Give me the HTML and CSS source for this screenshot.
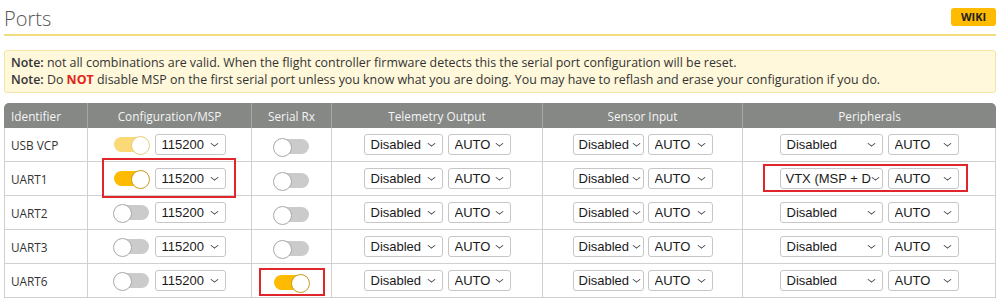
FILE: index.html
```html
<!DOCTYPE html>
<html lang="en">
  <head>
    <meta charset="UTF-8" />
    <meta name="viewport" content="width=device-width, initial-scale=1.0" />
    <title>Ports</title>
    <link rel="stylesheet" href="styles.css">
  </head>
  <body>
    <div class="wrap">
      <div class="title-bar">
        <h1>Ports</h1>
        <a class="wiki" href="#">WIKI</a>
      </div>

      <div class="note">
        <p><b>Note:</b> not all combinations are valid. When the flight controller firmware detects this the serial port configuration will be reset.</p>
        <p><b>Note:</b> Do <span class="warn">NOT</span> disable MSP on the first serial port unless you know what you are doing. You may have to reflash and erase your configuration if you do.</p>
      </div>

      <table class="ports">
        <thead>
          <tr>
            <th class="c-id">Identifier</th>
            <th class="c-cfg">Configuration/MSP</th>
            <th class="c-rx">Serial Rx</th>
            <th class="c-tel">Telemetry Output</th>
            <th class="c-sen">Sensor Input</th>
            <th class="c-per">Peripherals</th>
          </tr>
        </thead>
        <tbody>
          <tr>
            <td class="ident">USB VCP</td>
            <td><div class="pair"><span class="switch on faded"></span><span class="sel w71"><span>115200</span><i></i></span></div></td>
            <td><span class="switch"></span></td>
            <td><div class="pair g5"><span class="sel w79"><span>Disabled</span><i></i></span><span class="sel w63"><span>AUTO</span><i></i></span></div></td>
            <td><div class="pair g4"><span class="sel w71 tight"><span>Disabled</span><i></i></span><span class="sel w65"><span>AUTO</span><i></i></span></div></td>
            <td><div class="pair g5"><span class="sel w103"><span>Disabled</span><i></i></span><span class="sel w71"><span>AUTO</span><i></i></span></div></td>
          </tr>
          <tr>
            <td class="ident">UART1</td>
            <td><div class="pair mark mark-cfg"><span class="switch on"></span><span class="sel w71"><span>115200</span><i></i></span></div></td>
            <td><span class="switch"></span></td>
            <td><div class="pair g5"><span class="sel w79"><span>Disabled</span><i></i></span><span class="sel w63"><span>AUTO</span><i></i></span></div></td>
            <td><div class="pair g4"><span class="sel w71 tight"><span>Disabled</span><i></i></span><span class="sel w65"><span>AUTO</span><i></i></span></div></td>
            <td><div class="pair g5 mark mark-per"><span class="sel w103 tight"><span>VTX (MSP + D</span><i></i></span><span class="sel w71"><span>AUTO</span><i></i></span></div></td>
          </tr>
          <tr>
            <td class="ident">UART2</td>
            <td><div class="pair"><span class="switch"></span><span class="sel w71"><span>115200</span><i></i></span></div></td>
            <td><span class="switch"></span></td>
            <td><div class="pair g5"><span class="sel w79"><span>Disabled</span><i></i></span><span class="sel w63"><span>AUTO</span><i></i></span></div></td>
            <td><div class="pair g4"><span class="sel w71 tight"><span>Disabled</span><i></i></span><span class="sel w65"><span>AUTO</span><i></i></span></div></td>
            <td><div class="pair g5"><span class="sel w103"><span>Disabled</span><i></i></span><span class="sel w71"><span>AUTO</span><i></i></span></div></td>
          </tr>
          <tr>
            <td class="ident">UART3</td>
            <td><div class="pair"><span class="switch"></span><span class="sel w71"><span>115200</span><i></i></span></div></td>
            <td><span class="switch"></span></td>
            <td><div class="pair g5"><span class="sel w79"><span>Disabled</span><i></i></span><span class="sel w63"><span>AUTO</span><i></i></span></div></td>
            <td><div class="pair g4"><span class="sel w71 tight"><span>Disabled</span><i></i></span><span class="sel w65"><span>AUTO</span><i></i></span></div></td>
            <td><div class="pair g5"><span class="sel w103"><span>Disabled</span><i></i></span><span class="sel w71"><span>AUTO</span><i></i></span></div></td>
          </tr>
          <tr>
            <td class="ident">UART6</td>
            <td><div class="pair"><span class="switch"></span><span class="sel w71"><span>115200</span><i></i></span></div></td>
            <td><div class="pair mark mark-rx"><span class="switch on"></span></div></td>
            <td><div class="pair g5"><span class="sel w79"><span>Disabled</span><i></i></span><span class="sel w63"><span>AUTO</span><i></i></span></div></td>
            <td><div class="pair g4"><span class="sel w71 tight"><span>Disabled</span><i></i></span><span class="sel w65"><span>AUTO</span><i></i></span></div></td>
            <td><div class="pair g5"><span class="sel w103"><span>Disabled</span><i></i></span><span class="sel w71"><span>AUTO</span><i></i></span></div></td>
          </tr>
        </tbody>
      </table>
    </div>
  </body>
</html>
```

FILE: styles.css
```css
* {
  box-sizing: border-box;
  margin: 0;
  padding: 0;
}
body {
  background-color: #fff;
  font-family: "Open Sans", "Liberation Sans", sans-serif;
  font-size: 13px;
  color: #333;
}
.wrap {
  padding: 0 4px;
}
.title-bar {
  display: flex;
  justify-content: space-between;
  align-items: flex-start;
  height: 36px;
  padding-top: 6px;
  border-bottom: 2px solid #f1dc80;
}
h1 {
  font-weight: 300;
  font-size: 20px;
  line-height: 26px;
  color: #555;
}
.wiki {
  display: block;
  width: 45px;
  height: 18px;
  line-height: 18px;
  margin-top: 2px;
  text-align: center;
  background-color: #ffbb00;
  border-radius: 3px;
  color: #222;
  font-size: 11px;
  font-weight: 700;
  text-decoration: none;
}
.note {
  margin-top: 14px;
  padding: 3px 6px 4px;
  background-color: #fff8db;
  border: 1px solid #f3e4a8;
  border-radius: 3px;
  font-size: 12.4px;
  line-height: 17px;
  color: #333;
}
.note b {
  font-weight: 600;
}
.warn {
  color: #e2231a;
  font-weight: 700;
}

/* table */
.ports {
  width: 100%;
  margin-top: 10px;
  border-collapse: separate;
  border-spacing: 0;
  table-layout: fixed;
}
.c-id { width: 83px; }
.c-cfg { width: 164px; }
.c-rx { width: 80px; }
.c-tel { width: 211px; }
.c-sen { width: 200px; }
.c-per { width: 254px; }
.ports th {
  height: 25px;
  background-color: #858885;
  color: #f4f4f4;
  font-weight: 400;
  font-size: 11.8px;
  text-align: center;
  border-left: 1px solid #a5a8a5;
}
.ports th:first-child {
  text-align: left;
  padding-left: 7px;
  border-left: none;
  border-top-left-radius: 5px;
}
.ports th:last-child {
  border-top-right-radius: 5px;
}
.ports td {
  height: 34px;
  padding: 0;
  border-left: 1px solid #d0d0d0;
  border-bottom: 1px solid #d0d0d0;
  text-align: center;
  vertical-align: middle;
}
.ports td:last-child {
  border-right: 1px solid #d0d0d0;
}
.ports td.ident {
  text-align: left;
  padding-left: 6px;
  font-size: 11.8px;
  color: #333;
}

.pair {
  position: relative;
  display: inline-flex;
  align-items: center;
  gap: 6px;
  vertical-align: middle;
}
.pair.g5 { gap: 5px; }
.pair.g4 { gap: 4px; }

/* toggle switch */
.switch {
  position: relative;
  display: inline-block;
  width: 35px;
  height: 15px;
  border-radius: 8px;
  background-color: #cbcbcb;
  vertical-align: middle;
}
.switch::after {
  content: "";
  position: absolute;
  top: -1px;
  left: -1px;
  width: 17px;
  height: 17px;
  border-radius: 50%;
  background-color: #fff;
  border: 1px solid #a9a9a9;
}
.switch.on {
  background-color: #ffbb00;
}
.switch.on::after {
  left: auto;
  right: -1px;
  border-color: #c79a1c;
}
.switch.on.faded {
  background-color: #fcd977;
}
.switch.on.faded::after {
  border-color: #e5cb80;
}

/* select look */
.sel {
  display: inline-flex;
  align-items: center;
  height: 21px;
  padding: 0 7px 0 6px;
  border: 1px solid #c6c6c6;
  border-radius: 3px;
  background-color: #fff;
  font-family: "Liberation Sans", Arial, sans-serif;
  font-size: 13px;
  color: #1a1a1a;
  text-align: left;
}
.sel span {
  flex: 1;
  overflow: hidden;
  white-space: nowrap;
}
.sel i {
  flex: none;
  width: 7px;
  height: 7px;
  margin: -3px 0 0 4px;
  border-right: 1.3px solid #333;
  border-bottom: 1.3px solid #333;
  transform: scale(0.8, 0.6) rotate(45deg);
}
.sel.tight {
  padding: 0 3px 0 5px;
}
.sel.tight i {
  margin-left: 1px;
}
.w63 { width: 63px; }
.w65 { width: 65px; }
.w71 { width: 71px; }
.w79 { width: 79px; }
.w103 { width: 103px; }

/* red highlight boxes */
.mark::after {
  content: "";
  position: absolute;
  border: 2px solid #e0262b;
}
.mark-cfg::after {
  top: -10px;
  bottom: -9px;
  left: -12px;
  right: -10px;
}
.mark-per::after {
  top: -4px;
  bottom: -3px;
  left: -17px;
  right: -9px;
}
.mark-rx::after {
  top: -7px;
  bottom: -6px;
  left: -15px;
  right: -16px;
}
```
